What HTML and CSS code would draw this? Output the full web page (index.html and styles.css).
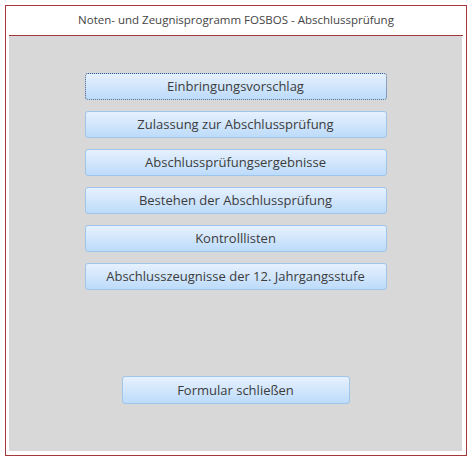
FILE: index.html
```html
<!DOCTYPE html>
<html>
<head>
<meta charset="utf-8">
<link rel="stylesheet" href="styles.css">
</head>
<body>
<div class="frame">
  <div class="title">Noten- und Zeugnisprogramm FOSBOS - Abschlussprüfung</div>
  <div class="panel">
    <div class="menu">
      <button class="btn focused">Einbringungsvorschlag</button>
      <button class="btn">Zulassung zur Abschlussprüfung</button>
      <button class="btn">Abschlussprüfungsergebnisse</button>
      <button class="btn">Bestehen der Abschlussprüfung</button>
      <button class="btn">Kontrolllisten</button>
      <button class="btn">Abschlusszeugnisse der 12. Jahrgangsstufe</button>
    </div>
    <button class="btn close">Formular schließen</button>
  </div>
</div>
</body>
</html>
```
FILE: styles.css
```css
html, body {
  margin: 0;
  padding: 0;
  background: #ffffff;
}
body {
  font-family: "Open Sans", "Noto Sans", "DejaVu Sans", sans-serif;
  color: #444444;
}
.frame {
  box-sizing: border-box;
  margin: 5px 0 0 5px;
  width: 462px;
  height: 451px;
  border: 1px solid #a3393b;
  padding: 0 4px 4px 3px;
  display: flex;
  flex-direction: column;
}
.title {
  box-sizing: border-box;
  height: 30px;
  border-bottom: 1px solid #a3393b;
  margin-right: -1px;
  text-align: center;
  font-size: 11.5px;
  line-height: 28px;
  color: #444444;
}
.panel {
  flex: 1;
  background: #d8d8d8;
  display: flex;
  flex-direction: column;
  align-items: center;
  padding-top: 37px;
}
.menu {
  display: flex;
  flex-direction: column;
  gap: 11px;
}
.btn {
  box-sizing: border-box;
  width: 302px;
  height: 27px;
  border: 1px solid #9fc5ea;
  border-radius: 3px;
  background: linear-gradient(to bottom, #e6f1fe 0%, #d2e6fc 50%, #bcdbfa 100%);
  font-family: "Open Sans", "Noto Sans", "DejaVu Sans", sans-serif;
  font-size: 13px;
  color: #3c3c3c;
  padding: 0;
  margin: 0;
  line-height: 25px;
}
.btn.focused {
  border: 1px dotted #3c5a80;
}
.btn.close {
  width: 228px;
  height: 28px;
  margin-top: 86px;
}
```
